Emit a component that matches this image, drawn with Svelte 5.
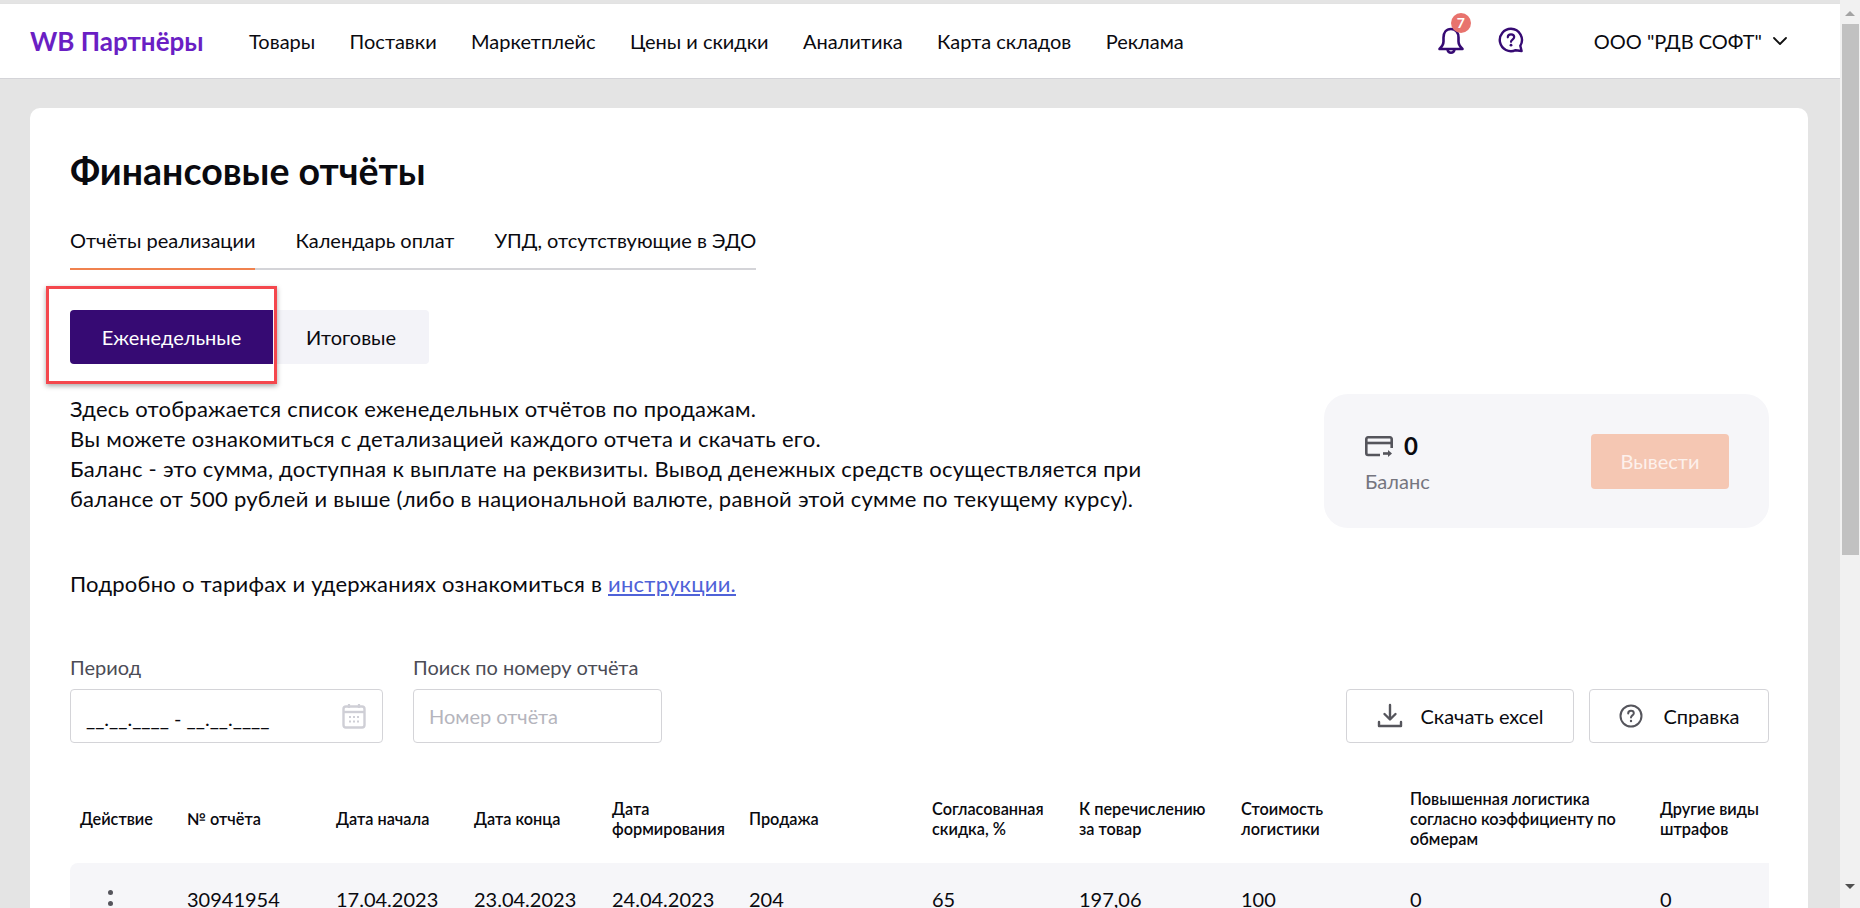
<script>
  const nav = ['Товары', 'Поставки', 'Маркетплейс', 'Цены и скидки', 'Аналитика', 'Карта складов', 'Реклама'];
  const tabs = ['Отчёты реализации', 'Календарь оплат', 'УПД, отсутствующие в ЭДО'];
  const columns = [
    { title: 'Действие' },
    { title: '№ отчёта', value: '30941954' },
    { title: 'Дата начала', value: '17.04.2023' },
    { title: 'Дата конца', value: '23.04.2023' },
    { title: 'Дата формирования', value: '24.04.2023' },
    { title: 'Продажа', value: '204' },
    { title: 'Согласованная скидка, %', value: '65' },
    { title: 'К перечислению за товар', value: '197,06' },
    { title: 'Стоимость логистики', value: '100' },
    { title: 'Повышенная логистика согласно коэффициенту по обмерам', value: '0' },
    { title: 'Другие виды штрафов', value: '0' }
  ];
</script>

<div class="page">
  <div class="main">
    <header class="header">
      <div class="logo">WB Партнёры</div>
      <nav class="nav">
        {#each nav as item}
          <span>{item}</span>
        {/each}
      </nav>
      <div class="header-right">
        <div class="bell">
          <svg width="28" height="28" viewBox="0 0 28 28" fill="none" stroke="#360a73" stroke-width="2.6" stroke-linejoin="round" stroke-linecap="round">
            <path d="M14 2c-5 0-7.500 3.800-7.500 8.500v4c0 3-1.500 5-4 7.500h23c-2.500-2.500-4-4.500-4-7.500v-4C21.500 5.800 19 2 14 2z" />
            <path d="M10.500 22.500c.5 2.200 1.800 3.300 3.500 3.300s3-1.100 3.500-3.300" />
          </svg>
          <span class="badge">7</span>
        </div>
        <svg class="help" width="26" height="26" viewBox="0 0 26 26" fill="none">
          <path d="M13 1.800a11.200 11.200 0 1 0 4.600 21.400l6 .8-1.300-5.200A11.200 11.200 0 0 0 13 1.800z" stroke="#360a73" stroke-width="2.400" stroke-linejoin="round" />
          <path d="M9.800 10.300c0-1.900 1.400-3 3.200-3s3.200 1.100 3.200 2.800c0 2.400-3.200 2.500-3.200 4.700" stroke="#360a73" stroke-width="2.200" stroke-linecap="round" />
          <circle cx="13" cy="18.200" r="1.400" fill="#360a73" />
        </svg>
        <div class="org">ООО "РДВ СОФТ"</div>
        <svg width="16" height="10" viewBox="0 0 16 10" fill="none"><path d="M2 2l6 6 6-6" stroke="#111" stroke-width="1.800" stroke-linecap="round" stroke-linejoin="round" /></svg>
      </div>
    </header>

    <section class="card">
      <h1>Финансовые отчёты</h1>
      <div class="tabs">
        {#each tabs as tab, i}
          <div class="tab" class:active={i === 0}>{tab}</div>
        {/each}
      </div>

      <div class="switch">
        <div class="seg seg-on">Еженедельные</div>
        <div class="seg seg-off">Итоговые</div>
        <div class="marker"></div>
      </div>

      <div class="info">
        <div class="info-text">
          <p>Здесь отображается список еженедельных отчётов по продажам.<br />Вы можете ознакомиться с детализацией каждого отчета и скачать его.<br />Баланс - это сумма, доступная к выплате на реквизиты. Вывод денежных средств осуществляется при<br />балансе от 500 рублей и выше (либо в национальной валюте, равной этой сумме по текущему курсу).</p>
          <p class="more">Подробно о тарифах и удержаниях ознакомиться в <a href="#top">инструкции.</a></p>
        </div>
        <div class="balance">
          <div class="balance-left">
            <div class="balance-top">
              <svg width="28" height="21" viewBox="0 0 28 21" fill="none" stroke="#55555c" stroke-width="2.600">
                <path d="M15 19H3a1.700 1.700 0 0 1-1.700-1.700V3A1.700 1.700 0 0 1 3 1.300h22A1.700 1.700 0 0 1 26.700 3v9" />
                <path d="M1.300 7h25.400" />
                <path d="M18 17.500h7" />
                <path d="M23 14l4 3.500-4 3.500z" fill="#55555c" stroke="none" />
              </svg>
              <span class="amount">0</span>
            </div>
            <div class="balance-label">Баланс</div>
          </div>
          <div class="withdraw">Вывести</div>
        </div>
      </div>

      <div class="filters">
        <div class="field period">
          <div class="label">Период</div>
          <div class="input date">
            <span>__.__.____ - __.__.____</span>
            <svg width="24" height="26" viewBox="0 0 24 26" fill="none">
              <rect x="1.500" y="3.500" width="21" height="21" rx="2.500" stroke="#cfcfd6" stroke-width="2.400" />
              <path d="M1.500 9h21" stroke="#cfcfd6" stroke-width="2.400" />
              <path d="M7 1v4M17 1v4" stroke="#cfcfd6" stroke-width="2.200" />
              <path d="M7 14h2M11 14h2M15 14h2M7 18.500h2M11 18.500h2M15 18.500h2" stroke="#cfcfd6" stroke-width="2" />
            </svg>
          </div>
        </div>
        <div class="field search">
          <div class="label">Поиск по номеру отчёта</div>
          <div class="input placeholder">Номер отчёта</div>
        </div>
        <div class="actions">
          <div class="action excel">
            <svg width="26" height="26" viewBox="0 0 26 26" fill="none" stroke="#55555c" stroke-width="2.400" stroke-linecap="round" stroke-linejoin="round">
              <path d="M13 2v14M7.500 11l5.500 5.500 5.500-5.500" />
              <path d="M2 19v4h22v-4" />
            </svg>
            <span>Скачать excel</span>
          </div>
          <div class="action help-btn">
            <svg width="24" height="24" viewBox="0 0 24 24" fill="none">
              <circle cx="12" cy="12" r="10.500" stroke="#55555c" stroke-width="2" />
              <path d="M9.200 9.500c0-1.700 1.200-2.700 2.800-2.700s2.800 1 2.800 2.400c0 2.100-2.800 2.200-2.800 4.200" stroke="#55555c" stroke-width="2" stroke-linecap="round" />
              <circle cx="12" cy="17" r="1.200" fill="#55555c" />
            </svg>
            <span>Справка</span>
          </div>
        </div>
      </div>

      <div class="table-head">
        {#each columns as col}
          <div class="th">{col.title}</div>
        {/each}
      </div>
      <div class="table-row">
        {#each columns as col, i}
          <div class="td">
            {#if i === 0}
              <div class="dots"><i></i><i></i><i></i></div>
            {:else}
              {col.value}
            {/if}
          </div>
        {/each}
      </div>
    </section>
  </div>

  <aside class="scrollbar">
    <div class="arrow up"></div>
    <div class="thumb"></div>
    <div class="arrow down"></div>
  </aside>
</div>

<style>
  :global(body) {
    margin: 0;
    overflow: hidden;
  }
  .page {
    display: flex;
    width: 1860px;
    height: 908px;
    overflow: hidden;
    background: #e4e4e4;
    font-family: Lato, "Noto Sans", sans-serif;
    color: #0a0a0f;
    font-size: 20px;
  }
  .main {
    flex: 1;
    min-width: 0;
    height: 908px;
    overflow: hidden;
  }
  .header {
    height: 74px;
    margin-top: 3px;
    border-top: 1px solid #e2e2e2;
    border-bottom: 1px solid #d4d4d8;
    background: #fff;
    display: flex;
    align-items: center;
    padding: 0 0 0 30px;
  }
  .logo {
    color: #6a1fc4;
    font-size: 26px;
    font-weight: 700;
    width: 219px;
  }
  .nav {
    display: flex;
    gap: 34.4px;
  }
  .header-right {
    margin-left: auto;
    display: flex;
    align-items: center;
    padding-right: 52px;
  }
  .bell {
    position: relative;
    width: 28px;
    height: 28px;
    margin-right: 33px;
  }
  .badge {
    position: absolute;
    left: 14px;
    top: -14px;
    width: 20px;
    height: 20px;
    border-radius: 50%;
    background: #e8736d;
    color: #fff;
    font-size: 14px;
    font-weight: 700;
    line-height: 20px;
    text-align: center;
  }
  .help {
    margin: -3px 70px 0 0;
  }
  .org {
    margin-right: 10px;
  }
  .card {
    margin: 29px 0 0 30px;
    width: 1778px;
    box-sizing: border-box;
    padding: 41px 39px 0 40px;
    background: #fff;
    border-radius: 10px 10px 0 0;
    height: 900px;
  }
  h1 {
    margin: 0;
    font-size: 37.5px;
    line-height: 44px;
    font-weight: 700;
  }
  .tabs {
    display: inline-flex;
    gap: 40px;
    margin-top: 25px;
    border-bottom: 2px solid #d4d4d8;
  }
  .tab {
    padding: 11px 0 17px;
    line-height: 22px;
    margin-bottom: -2px;
    border-bottom: 2px solid transparent;
  }
  .tab.active {
    border-bottom-color: #f0824f;
  }
  .switch {
    position: relative;
    display: flex;
    margin-top: 40px;
    width: 359px;
    height: 54px;
    line-height: 54px;
    text-align: center;
  }
  .seg-on {
    width: 203px;
    background: #360a73;
    color: #fff;
    border-radius: 4px 0 0 4px;
  }
  .seg-off {
    flex: 1;
    background: #f3f3f8;
    border-radius: 0 4px 4px 0;
  }
  .marker {
    position: absolute;
    left: -24px;
    top: -24px;
    width: 225px;
    height: 92px;
    border: 3px solid #f4474d;
    box-shadow: 0 2px 5px rgba(0, 0, 0, 0.35);
  }
  .info {
    display: flex;
    justify-content: space-between;
    align-items: flex-start;
    margin-top: 30px;
  }
  .info-text {
    font-size: 22px;
    letter-spacing: 0.25px;
    line-height: 30px;
  }
  p {
    margin: 0;
  }
  .more {
    margin-top: 55px;
  }
  a {
    color: #4f62d8;
  }
  .balance {
    width: 445px;
    height: 134px;
    box-sizing: border-box;
    padding: 0 40px 0 41px;
    background: #f6f6f9;
    border-radius: 24px;
    display: flex;
    align-items: center;
    justify-content: space-between;
  }
  .balance-left {
    padding-top: 2px;
  }
  .balance-top {
    display: flex;
    align-items: center;
    gap: 11px;
  }
  .amount {
    font-size: 24px;
    font-weight: 700;
    line-height: 30px;
  }
  .balance-label {
    color: #75757f;
    margin-top: 8px;
    line-height: 24px;
  }
  .withdraw {
    width: 138px;
    height: 55px;
    line-height: 55px;
    text-align: center;
    color: #fdf1ec;
    background: #f5c7b3;
    border-radius: 4px;
  }
  .filters {
    display: flex;
    align-items: flex-end;
    margin-top: 56px;
  }
  .field {
    display: flex;
    flex-direction: column;
  }
  .period {
    width: 313px;
    margin-right: 30px;
  }
  .search {
    width: 249px;
  }
  .label {
    color: #4c4c56;
    line-height: 24px;
    margin-bottom: 10px;
  }
  .input {
    height: 54px;
    box-sizing: border-box;
    border: 1px solid #d4d4d8;
    border-radius: 4px;
    display: flex;
    align-items: center;
    padding: 0 15px;
  }
  .date {
    justify-content: space-between;
    padding-right: 16px;
  }
  .date span {
    padding-top: 3px;
  }
  .placeholder {
    color: #b5b5bd;
  }
  .actions {
    margin-left: auto;
    display: flex;
    gap: 15px;
  }
  .action {
    height: 54px;
    box-sizing: border-box;
    border: 1px solid #d4d4d8;
    border-radius: 4px;
    display: flex;
    align-items: center;
    justify-content: center;
  }
  .excel {
    width: 228px;
    gap: 18px;
  }
  .help-btn {
    width: 180px;
    gap: 21px;
  }
  .table-head,
  .table-row {
    display: grid;
    grid-template-columns: 117px 149px 138px 138px 137px 183px 147px 162px 169px 250px 108px;
  }
  .table-head {
    margin-top: 33px;
    height: 86px;
    align-items: center;
  }
  .th {
    font-size: 16.3px;
    font-weight: 600;
    line-height: 20px;
    padding-right: 14px;
  }
  .th:first-child {
    padding-left: 10px;
  }
  .th:nth-child(8) {
    padding-right: 20px;
  }
  .th:last-child {
    padding-right: 0;
  }
  .table-row {
    margin-top: 1px;
    height: 72px;
    align-items: center;
    background: #f6f6f9;
    border-radius: 8px 0 0 0;
  }
  .dots {
    display: flex;
    flex-direction: column;
    align-items: center;
    gap: 6px;
    width: 80px;
    margin-top: 8px;
  }
  .dots i {
    width: 5px;
    height: 5px;
    border-radius: 50%;
    background: #55555c;
  }
  .scrollbar {
    width: 20px;
    height: 908px;
    margin-top: 0;
    box-sizing: border-box;
    padding: 4px 0 0;
    background: #f1f1f1;
    display: flex;
    flex-direction: column;
    align-items: center;
  }
  .arrow {
    width: 0;
    height: 0;
    border-left: 5px solid transparent;
    border-right: 5px solid transparent;
  }
  .arrow.up {
    margin-top: 7px;
    border-bottom: 5px solid #a3a3a3;
  }
  .arrow.down {
    margin-top: 329px;
    border-top: 5px solid #505050;
  }
  .thumb {
    width: 17px;
    height: 531px;
    margin-top: 8px;
    background: #c1c1c1;
  }
</style>
